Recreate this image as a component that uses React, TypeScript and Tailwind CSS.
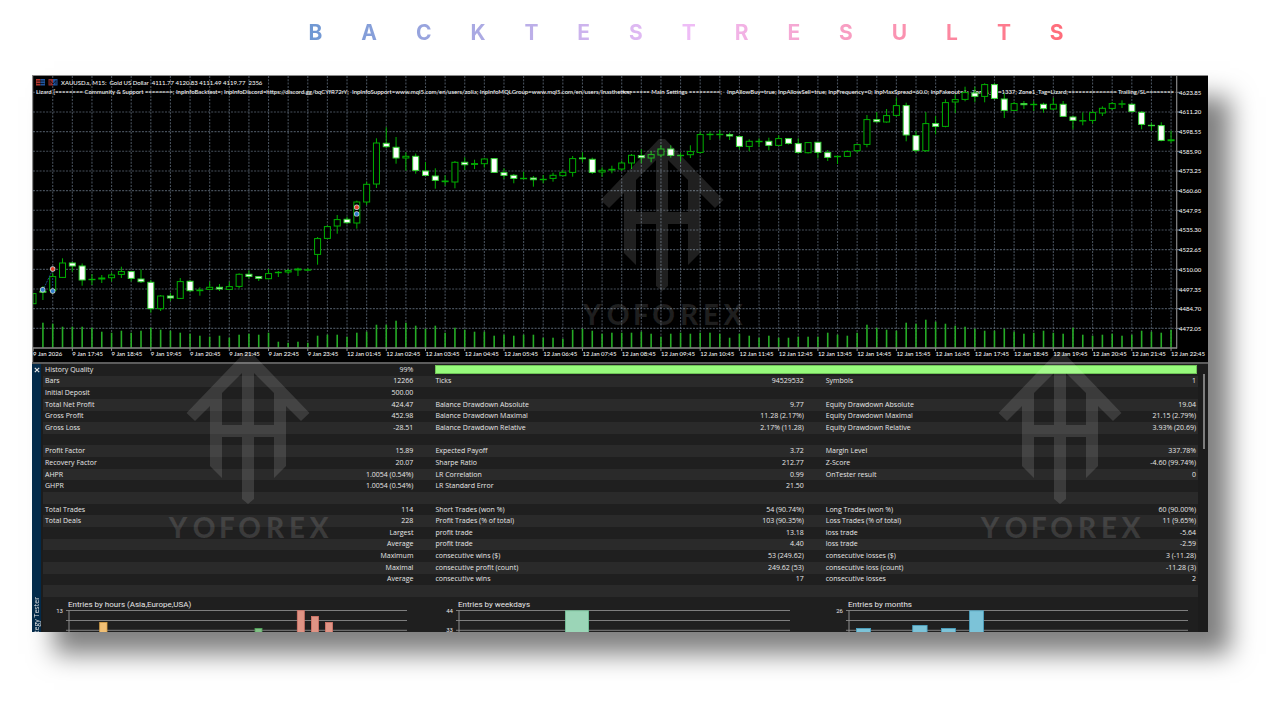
type Candle = [filled: 0 | 1, top: number, bottom: number, high: number, low: number];

const candles: Candle[] = [
  [0, 293.3, 304, 293, 304], [1, 291, 292.5, 286, 300], [0, 276.3, 291, 273, 294], [0, 262.7, 277.7, 258.3, 278],
  [1, 262.7, 266.3, 262, 271.7], [1, 265.7, 280.3, 263.5, 285.7], [0, 279, 280, 274, 285], [0, 277.7, 279.3, 275, 283],
  [0, 274.7, 278, 272.7, 281.5], [0, 271.3, 274.7, 266.7, 278], [1, 271.3, 278.7, 271, 281.5], [1, 278.7, 282, 269.5, 283],
  [1, 282, 309, 280, 312.7], [0, 295.7, 309, 295, 311], [1, 295.7, 298.3, 293, 301], [0, 281.3, 298.7, 278, 299],
  [1, 281, 291, 280, 292], [0, 289.7, 291, 287.3, 295.7], [0, 287, 289.7, 281.7, 290], [1, 287, 289.3, 284, 291],
  [0, 286.3, 289.7, 281.7, 290], [0, 274, 286.7, 273.3, 288.3], [1, 274, 276.7, 270.3, 278.7], [1, 276.3, 278.7, 276, 281],
  [0, 273.3, 279, 269, 279.3], [0, 272, 273, 271, 277], [0, 270.3, 272.3, 269, 274], [0, 268.7, 270.3, 267.7, 276],
  [0, 269.5, 270.5, 268, 271], [0, 238.3, 254.7, 237, 264.7], [0, 226.3, 238.7, 225.5, 239], [0, 219.3, 226.3, 215, 233.7],
  [1, 219, 223, 216.7, 224], [0, 201.7, 223.3, 200.7, 228.7], [0, 184, 202.3, 181.7, 205], [0, 142.7, 184.3, 138.3, 188],
  [1, 143, 147, 127.3, 148], [1, 147, 158.3, 137, 163.7], [0, 156, 158.3, 152.3, 170.7], [1, 156, 170.7, 153.5, 173.7],
  [1, 170.7, 175.7, 162, 176], [1, 175.7, 180.7, 168.3, 188.7], [0, 180.7, 182, 175.3, 185.7], [0, 162, 182.3, 161, 188.3],
  [1, 162, 165, 157.3, 170], [0, 163.3, 164.7, 159.7, 169], [0, 158.7, 164, 158.3, 167.7], [1, 158.3, 172.7, 158, 173],
  [1, 172.3, 175.7, 168.3, 179], [1, 175, 178.7, 174, 183.3], [0, 178, 178.7, 171.7, 179.3], [1, 177.7, 180, 176, 186.7],
  [0, 179, 180, 175, 183.3], [0, 175, 178.7, 172.7, 181.7], [0, 172, 176, 170, 176.3], [0, 158.3, 172.7, 156, 176.7],
  [1, 157.7, 159, 152.3, 162.3], [1, 159, 172.7, 157.7, 174], [0, 170, 172.3, 167.3, 176.7], [0, 169, 170.3, 165.7, 173.3],
  [0, 162.7, 169.3, 160.7, 171], [0, 155, 163.3, 154, 169], [1, 155.3, 158, 149.3, 163.3], [0, 154.3, 158.3, 151, 162.3],
  [0, 148.7, 155.3, 145.3, 157.3], [1, 148.7, 155.7, 145.3, 157.7], [0, 155, 156, 152.7, 161.7], [0, 151.3, 155, 145.3, 158],
  [0, 134.3, 152.7, 131.7, 153.3], [0, 134, 135, 131.7, 140], [0, 134, 135, 130, 139], [1, 134.3, 136.3, 132.7, 140],
  [1, 136.3, 146.7, 135.3, 149.3], [0, 141, 146.7, 139.3, 151.3], [0, 141, 141.7, 138.3, 147], [1, 141, 145.7, 137.7, 150.3],
  [0, 138.3, 145.7, 135.3, 146], [1, 138.3, 143.7, 138, 144.5], [1, 143.3, 152.7, 138.3, 153.7], [0, 142.3, 153, 142, 153.5],
  [1, 142, 152.7, 141.7, 158.3], [1, 152.3, 157.7, 150, 161], [0, 156, 157, 155.5, 164], [0, 151.3, 156.7, 150.3, 157],
  [0, 144.3, 151, 144, 152.7], [0, 119.3, 144.7, 115, 147.3], [1, 119.3, 122, 112, 122.7], [0, 115.3, 122.3, 109, 122.7],
  [0, 105.3, 115.7, 97.7, 116.7], [1, 105.3, 135.3, 102.7, 141.3], [1, 135.3, 150.7, 130.7, 152.7], [0, 123.3, 151, 112, 152],
  [1, 123.3, 126.7, 116, 134.3], [0, 102.3, 126.7, 99.3, 127.3], [0, 99.3, 102.3, 94.3, 113], [0, 92.3, 99.7, 86.7, 101.3],
  [1, 92.7, 96.7, 86.7, 102.3], [0, 84.3, 96.7, 83.3, 102.3], [1, 84.3, 98.7, 83.3, 99.3], [1, 98.7, 110.7, 93.3, 118],
  [0, 103.3, 110.7, 101.7, 111], [1, 103.3, 105, 101, 109], [0, 104, 105, 101, 111], [1, 104, 109, 102.7, 112.7],
  [0, 104, 109.3, 97.7, 110], [1, 104, 116.7, 101, 117], [1, 116.7, 120.7, 115.7, 129.3], [0, 120.3, 121, 112.3, 125.3],
  [0, 112.3, 120.7, 110.7, 123.7], [0, 108, 113.3, 106.3, 116], [0, 103.3, 108.7, 102, 110], [0, 103.5, 104.5, 100.3, 108],
  [1, 104, 111.7, 103.5, 112.7], [1, 112, 124.7, 111, 129.3], [1, 125, 126, 122.7, 130.7], [1, 125.3, 140.7, 122.3, 141.3],
  [0, 139.5, 141, 130.7, 142.7],
];

const volumes: number[] = [
  0, 25, 24, 21, 21, 21, 20, 16, 15, 17, 15, 17, 20, 18, 17, 15, 14, 12, 11, 12, 10, 13, 14, 13, 15, 6, 5, 6, 5, 12,
  13, 13, 11, 15, 16, 23, 23, 27, 25, 22, 19, 22, 15, 20, 18, 16, 16, 12, 13, 12, 13, 13, 10, 10, 9, 18, 19, 17, 14,
  15, 15, 15, 16, 14, 11, 14, 15, 14, 15, 15, 14, 10, 14, 12, 10, 12, 10, 10, 11, 11, 11, 15, 13, 12, 15, 23, 20, 18,
  17, 25, 24, 28, 26, 24, 22, 21, 19, 17, 17, 19, 16, 14, 15, 17, 15, 14, 20, 13, 12, 13, 14, 12, 13, 17, 16, 15, 18,
];

const prices = [
  '4623.85', '4611.20', '4598.55', '4585.90', '4573.25', '4560.60', '4547.95', '4535.30', '4522.65', '4510.00',
  '4497.35', '4484.70', '4472.05',
];

const times = [
  '9 Jan 2026',
  ...[17, 18, 19, 20, 21, 22, 23].map((h) => `9 Jan ${h}:45`),
  ...Array.from({ length: 22 }, (_, h) => `12 Jan ${String(h + 1).padStart(2, '0')}:45`),
];

const inputs: [number, string][] = [
  [36, 'Lizard [======== Community & Support ========; InpInfoBacktest=; InpInfoDiscord=https://discord.gg/bqCYfR72rY;'],
  [352, 'InpInfoSupport=www.mql5.com/en/users/zolia; InpInfoMQLGroup=www.mql5.com/en/users/lnasthetics;'],
  [622, '======== Main Settings =========;'],
  [727, 'InpAllowBuy=true; InpAllowSell=true; InpFrequency=0; InpMaxSpread=60.0; InpFakeout=1;'],
  [972, 'Zone1_ID=1337; Zone1_Tag=Lizard;'],
  [1068, '============== Trailing/SL========'],
];

const candleX = (i: number) => 33.1 + 9.81 * i;

function Marker({ x, y, color }: { x: number; y: number; color: string }) {
  return (
    <g>
      <circle cx={x} cy={y} r="2.7" fill="#c9d3da" />
      <circle cx={x} cy={y} r="2" fill={color} />
    </g>
  );
}

function PriceChart() {
  return (
    <svg
      viewBox="32 75 1176 287"
      className="block h-auto w-full bg-black font-[Lato,'Open_Sans',sans-serif] text-[6px] font-medium"
      role="img"
      aria-label="XAUUSD M15 candlestick chart"
    >
      <g stroke="#6b7a8a" strokeOpacity="0.65" strokeWidth="1.1" strokeDasharray="2 1.3">
        {Array.from({ length: 58 }, (_, k) => (
          <line key={k} x1={candleX(2 * k + 2)} x2={candleX(2 * k + 2)} y1="76" y2="347" />
        ))}
        {prices.map((p, k) => (
          <line key={p} x1="33" x2="1176" y1={92.3 + 19.67 * k} y2={92.3 + 19.67 * k} />
        ))}
      </g>
      <g fill="#25ab25">
        {volumes.map((v, i) => (
          <rect key={i} x={candleX(i) - 0.8} y={347.7 - v} width="1.6" height={v} />
        ))}
      </g>
      <g fill="#f4f4f4">
        <text x="61" y="84.5" xmlSpace="preserve">
          XAUUSD.s, M15:{'  '}Gold US Dollar{'  '}4111.77 4120.83 4111.49 4119.77{'  '}2356
        </text>
        {inputs.map(([x, t]) => (
          <text key={x} x={x} y="93.5">
            {t}
          </text>
        ))}
      </g>
      {candles.map(([filled, top, bottom, high, low], i) => {
        const x = candleX(i);
        const clipped = i === 0;
        return (
          <g key={i} stroke="#00b000" strokeWidth="1">
            <line x1={x} x2={x} y1={high} y2={low} />
            <rect
              x={clipped ? 33 : x - 3}
              y={top + 0.3}
              width={clipped ? 3 : 6}
              height={Math.max(bottom - top - 0.6, 0.4)}
              fill={filled ? '#ffffff' : '#000000'}
              stroke={filled ? '#35d435' : '#00b000'}
            />
          </g>
        );
      })}
      <line x1="44" x2="52" y1="288" y2="271" stroke="#1d4f86" strokeDasharray="2 1" />
      <line x1="52.7" x2="52.7" y1="278" y2="290" stroke="#1d4f86" strokeDasharray="2 1" />
      <Marker x={42.7} y={289.7} color="#2f7fcb" />
      <Marker x={52.7} y={291} color="#2f7fcb" />
      <Marker x={52.7} y={269} color="#e0452c" />
      <Marker x={356.7} y={207.2} color="#e0452c" />
      <Marker x={356.7} y={213.9} color="#2f7fcb" />
      <g>
        <rect x="36" y="79" width="4.5" height="6.5" fill="#b3382f" />
        <rect x="40.5" y="79" width="4.5" height="6.5" fill="#1f55a0" />
        <path d="M36.5 81h8M36.5 83.5h8" stroke="#000" strokeWidth="0.7" />
        <rect x="48.5" y="79" width="4.5" height="6.5" fill="#9c2f2a" />
        <rect x="53" y="79" width="4.5" height="6.5" fill="#1f55a0" />
        <path d="M50 84.5v-4l3 3.5 3-3.5v4" stroke="#0a0a12" strokeWidth="0.8" fill="none" />
      </g>
      <g stroke="#8a8a8a">
        <line x1="32" x2="1208" y1="75.5" y2="75.5" />
        <line x1="32.5" x2="32.5" y1="75" y2="362" strokeWidth="1.4" />
        <line x1="1176.7" x2="1176.7" y1="75" y2="348.5" strokeWidth="1.2" />
        <line x1="32" x2="1177" y1="348" y2="348" strokeWidth="1.4" />
        {times.map((t, k) => (
          <line key={t} x1={candleX(4 * k)} x2={candleX(4 * k)} y1="348" y2="351" />
        ))}
        {prices.map((p, k) => (
          <line key={p} x1="1177" x2="1180" y1={92.3 + 19.67 * k} y2={92.3 + 19.67 * k} />
        ))}
      </g>
      <g fill="#f4f4f4">
        {prices.map((p, k) => (
          <text key={p} x="1179" y={94.8 + 19.67 * k}>
            {p}
          </text>
        ))}
        {times.map((t, k) => (
          <text key={t} x={candleX(4 * k)} y="356">
            {t}
          </text>
        ))}
      </g>
    </svg>
  );
}

function Watermark() {
  return (
    <svg viewBox="-80 0 160 194" className="block w-40 overflow-visible" fill="#ffffff" fillOpacity="0.125" aria-hidden="true">
      <path
        fillRule="evenodd"
        d="M-3 0H3L61.5 61L53 69L38 54V114L26 126V85H6V147L0 152L-6 147V85H-26V126L-38 114V54L-53 69L-61.5 61ZM-6 21L-26 41V73H-6ZM6 21V73H26V41Z"
      />
      <g className="font-[Lato,sans-serif] text-[28px] font-black" textAnchor="middle">
        {['Y', 'O', 'F', 'O', 'R', 'E', 'X'].map((c, i) => (
          <text key={i} x={[-70, -44, -21, 1.5, 27, 49, 71][i]} y="186">
            {c}
          </text>
        ))}
      </g>
    </svg>
  );
}

type Row = [string, string, string?, string?, string?, string?];

const rows: Row[] = [
  ['Bars', '12266', 'Ticks', '94529532', 'Symbols', '1'],
  ['Initial Deposit', '500.00'],
  ['Total Net Profit', '424.47', 'Balance Drawdown Absolute', '9.77', 'Equity Drawdown Absolute', '19.04'],
  ['Gross Profit', '452.98', 'Balance Drawdown Maximal', '11.28 (2.17%)', 'Equity Drawdown Maximal', '21.15 (2.79%)'],
  ['Gross Loss', '-28.51', 'Balance Drawdown Relative', '2.17% (11.28)', 'Equity Drawdown Relative', '3.93% (20.69)'],
  ['\u00a0', ''],
  ['Profit Factor', '15.89', 'Expected Payoff', '3.72', 'Margin Level', '337.78%'],
  ['Recovery Factor', '20.07', 'Sharpe Ratio', '212.77', 'Z-Score', '-4.60 (99.74%)'],
  ['AHPR', '1.0054 (0.54%)', 'LR Correlation', '0.99', 'OnTester result', '0'],
  ['GHPR', '1.0054 (0.54%)', 'LR Standard Error', '21.50'],
  ['\u00a0', ''],
  ['Total Trades', '114', 'Short Trades (won %)', '54 (90.74%)', 'Long Trades (won %)', '60 (90.00%)'],
  ['Total Deals', '228', 'Profit Trades (% of total)', '103 (90.35%)', 'Loss Trades (% of total)', '11 (9.65%)'],
  ['', 'Largest', 'profit trade', '13.18', 'loss trade', '-5.64'],
  ['', 'Average', 'profit trade', '4.40', 'loss trade', '-2.59'],
  ['', 'Maximum', 'consecutive wins ($)', '53 (249.62)', 'consecutive losses ($)', '3 (-11.28)'],
  ['', 'Maximal', 'consecutive profit (count)', '249.62 (53)', 'consecutive loss (count)', '-11.28 (3)'],
  ['', 'Average', 'consecutive wins', '17', 'consecutive losses', '2'],
  ['\u00a0', ''],
];

function Stats() {
  return (
    <table className="h-[233px] w-full table-fixed border-collapse text-[7px] leading-[10px] font-medium text-[#e6e6e6]">
      <colgroup>
        <col className="w-[16.9%]" />
        <col className="w-[16.9%]" />
        <col className="w-[16.9%]" />
        <col className="w-[16.9%]" />
        <col className="w-[16.2%]" />
        <col className="w-[16.2%]" />
      </colgroup>
      <tbody>
        <tr className="bg-[#1f1f1f]">
          <th scope="row" className="p-0 pl-0.5 text-left font-medium">History Quality</th>
          <td className="p-0 pr-5 text-right">99%</td>
          <td colSpan={4} className="p-0 pr-px pl-0.5">
            <div className="h-[9px] border border-[#6fc457] bg-[#97fa7c]" />
          </td>
        </tr>
        {rows.map((r, i) => (
          <tr key={i} className="odd:bg-[#1f1f1f] even:bg-[#2a2a2a]">
            <th scope="row" className="p-0 pl-0.5 text-left font-medium">{r[0]}</th>
            <td className="p-0 pr-5 text-right">{r[1]}</td>
            <th scope="row" className="p-0 pl-0.5 text-left font-medium">{r[2]}</th>
            <td className="p-0 pr-5 text-right">{r[3]}</td>
            <th scope="row" className="p-0 pl-0.5 text-left font-medium">{r[4]}</th>
            <td className="p-0 pr-0.5 text-right">{r[5]}</td>
          </tr>
        ))}
      </tbody>
    </table>
  );
}

interface BarData {
  x: number;
  top: number;
  w: number;
  fill: string;
  edge: string;
}

interface EntriesProps {
  title: string;
  width: number;
  end: number;
  max: string;
  mid?: string;
  bars: BarData[];
}

function EntriesChart({ title, width, end, max, mid, bars }: EntriesProps) {
  return (
    <svg viewBox={`0 0 ${width} 35`} className="block w-full font-[Roboto,sans-serif]" role="img" aria-label={title}>
      <text x="25" y="10" fill="#e6e6e6" className="text-[8px]">{title}</text>
      <g stroke="#8f8f8f" strokeWidth="1">
        <path d={`M23 13.5H${end}M23 23.5H${end}M23 33.3H${end}`} opacity="0.85" />
        <path d="M26 13.5V35" />
      </g>
      <g fill="#e6e6e6" className="text-[6px]" textAnchor="end">
        <text x="20" y="15.5">{max}</text>
        {mid && <text x="20" y="35">{mid}</text>}
      </g>
      {bars.map((b) => (
        <rect key={b.x} x={b.x} y={b.top} width={b.w} height={40} fill={b.fill} stroke={b.edge} strokeWidth="0.8" />
      ))}
    </svg>
  );
}

const blue = { fill: '#7cc3d8', edge: '#4aa3c4' };
const red = { fill: '#df9485', edge: '#d9776a' };

export default function App() {
  return (
    <main className="min-h-screen overflow-hidden bg-white pb-12">
      <header className="pt-[19px] pr-[16.9%] pl-[24.1%]">
        <h1
          aria-label="Backtest results"
          className="flex justify-between bg-linear-to-r from-[#6f98d3] via-[#eebdf7] to-[#ff6c7a] bg-clip-text font-[Inter,sans-serif] text-[21px] leading-7 font-bold text-transparent"
        >
          {Array.from('BACKTESTRESULTS').map((c, i) => (
            <span key={i}>{c}</span>
          ))}
        </h1>
      </header>

      <section className="relative mt-7 mr-[72px] ml-8 bg-[#1c1c1c] font-['Open_Sans','Noto_Sans',sans-serif] shadow-[22px_22px_24px_rgba(0,0,0,0.5)]">
        <PriceChart />
        <div className="h-0.5 bg-[#5c5c5c]" />
        <div className="flex">
          <aside className="flex w-[9px] shrink-0 flex-col justify-between bg-[#032a49] text-[#e4e4e4]">
            <button type="button" aria-label="Close" className="flex h-3 items-center justify-center">
              <svg viewBox="0 0 6 6" className="size-[6px]" stroke="currentColor" strokeWidth="1.2">
                <path d="M0.8 0.8L5.2 5.2M5.2 0.8L0.8 5.2" />
              </svg>
            </button>
            <div className="h-[35px] overflow-hidden">
              <span className="block rotate-180 text-[7px] leading-[9px] whitespace-nowrap [writing-mode:vertical-rl]">
                Strategy Tester
              </span>
            </div>
          </aside>
          <div className="ml-0.5 min-w-0 flex-1 bg-[#1f1f1f]">
            <Stats />
            <div className="grid grid-cols-[390fr_390fr_375fr]">
              <EntriesChart
                title="Entries by hours (Asia,Europe,USA)"
                width={390}
                end={364}
                max="13"
                bars={[
                  { x: 56.7, top: 25.5, w: 7.3, fill: '#f0bf75', edge: '#dca447' },
                  { x: 212, top: 31.4, w: 7, fill: '#7fbf84', edge: '#4fa458' },
                  { x: 254.3, top: 13.7, w: 7, ...red },
                  { x: 268.4, top: 19.4, w: 7, ...red },
                  { x: 282.5, top: 25.4, w: 7, ...red },
                ]}
              />
              <EntriesChart
                title="Entries by weekdays"
                width={390}
                end={357}
                max="44"
                mid="33"
                bars={[{ x: 132.4, top: 13.8, w: 23.2, fill: '#9bd5b7', edge: '#74c79b' }]}
              />
              <EntriesChart
                title="Entries by months"
                width={375}
                end={365}
                max="26"
                bars={[
                  { x: 33.4, top: 31.4, w: 14.2, ...blue },
                  { x: 89.7, top: 28.4, w: 14.4, ...blue },
                  { x: 118.4, top: 31.4, w: 14, ...blue },
                  { x: 146.5, top: 13.8, w: 14, ...blue },
                ]}
              />
            </div>
          </div>
          <div className="w-[10px] shrink-0 pt-[10px] pl-[5px]">
            <div className="h-[75px] w-0.5 bg-[#7d7d7d]" />
          </div>
        </div>

        <div className="pointer-events-none absolute top-16 left-[53.6%] -translate-x-1/2">
          <Watermark />
        </div>
        <div className="pointer-events-none absolute top-[277px] left-[18.4%] -translate-x-1/2">
          <Watermark />
        </div>
        <div className="pointer-events-none absolute top-[277px] left-[87.4%] -translate-x-1/2">
          <Watermark />
        </div>
      </section>
    </main>
  );
}
